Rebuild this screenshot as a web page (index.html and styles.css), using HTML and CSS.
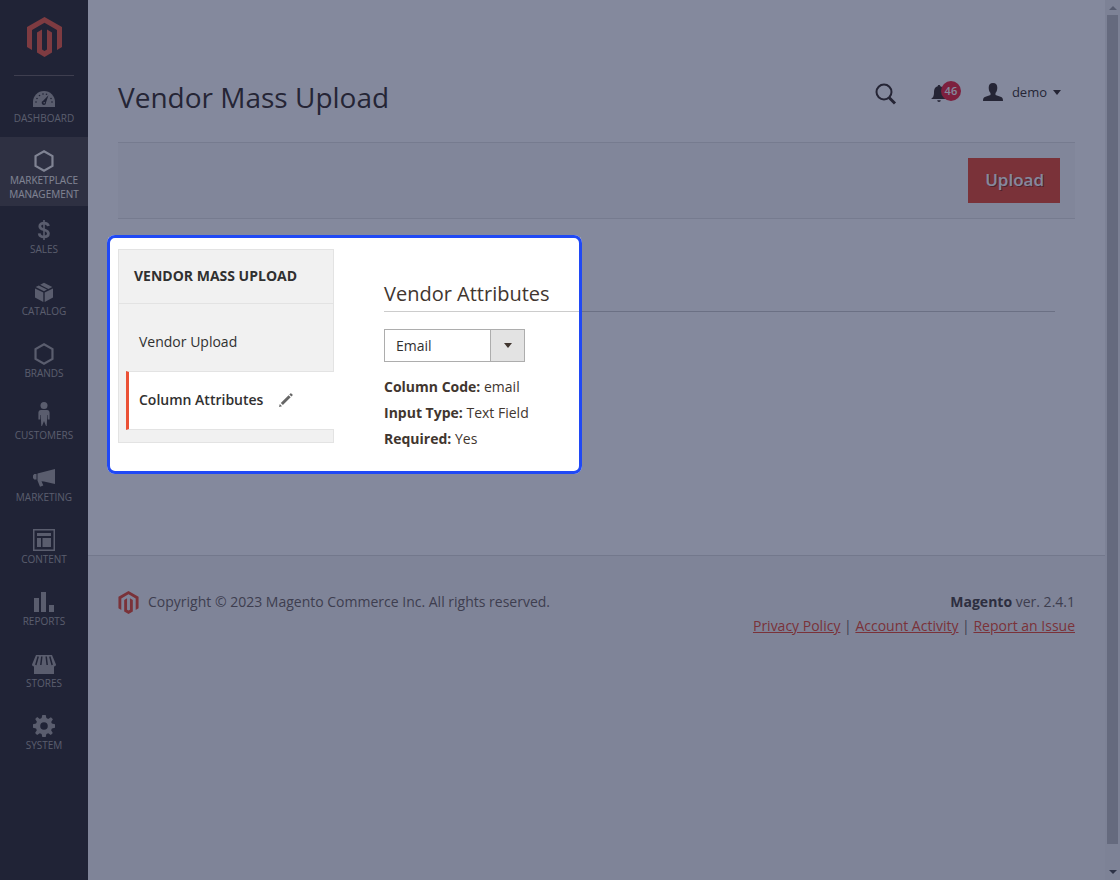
FILE: index.html
```html
<!DOCTYPE html>
<html lang="en">
<head>
<meta charset="utf-8">
<title>Vendor Mass Upload</title>
<link rel="stylesheet" href="styles.css">
</head>
<body>
<svg class="defs" width="0" height="0" aria-hidden="true">
  <symbol id="magento" viewBox="0 0 35 40">
    <path d="M17.500 0 35 10v20l-5 2.900V13L17.500 5.800 5 13v19.900L0 30V10z"/>
    <path d="M10 15.500l5-2.900v20l2.500 1.500 2.500-1.500v-20l5 2.900v20L17.500 40 10 35.500z"/>
  </symbol>
  <symbol id="hexagon" viewBox="0 0 20 20"><path d="M10 1.200 17.700 5.600v8.800L10 18.800 2.300 14.400V5.600z" fill="none" stroke="currentColor" stroke-width="2"/></symbol>
</svg>
<div class="app">
  <aside class="sidebar">
    <a class="logo" href="#" aria-label="Magento Admin"><svg width="35" height="40"><use href="#magento"/></svg></a>
    <nav class="menu">
      <a class="menu-item" href="#"><span class="menu-icon"><svg width="22" height="16" viewBox="0 0 22 16"><path d="M11 0A11 11 0 0 0 0 11v5h22v-5A11 11 0 0 0 11 0z"/><g class="cut"><circle cx="3" cy="11" r=".8"/><circle cx="4" cy="7.500" r=".8"/><circle cx="6.500" cy="4.500" r=".8"/><circle cx="10" cy="3" r=".8"/><circle cx="13.500" cy="3.200" r=".8"/><circle cx="18" cy="7.500" r=".8"/><circle cx="19" cy="11" r=".8"/><path d="M15.500 4.200 13 11.500a2.200 2.200 0 1 1-2.900-1.800z"/></g><circle cx="11.200" cy="11.800" r=".8"/></svg></span><span>Dashboard</span></a>
      <a class="menu-item is-active" href="#"><span class="menu-icon"><svg width="22" height="22"><use href="#hexagon"/></svg></span><span>Marketplace Management</span></a>
      <a class="menu-item" href="#"><span class="menu-icon"><svg width="14" height="20" viewBox="0 0 14 20"><path d="M11.500 6C11 4 9.300 3.200 7 3.200S2.800 4.200 2.800 6.200c0 4.600 8.600 2.500 8.600 7.300 0 2.200-1.900 3.300-4.400 3.300S2.500 15.700 2.200 13.300" fill="none" stroke="currentColor" stroke-width="2.800"/><path d="M6.200 0h1.600v20H6.200z"/></svg></span><span>Sales</span></a>
      <a class="menu-item" href="#"><span class="menu-icon"><svg width="18" height="20" viewBox="0 0 18 20"><path d="M0 6.500 8.300 10.600V20L0 15.600zM9.700 10.600 18 6.500v9.100L9.700 20zM.7 5 3.800 3.400l8.200 4.200L9 9.200zM5.200 2.700 9 .8l8.300 4.200-3.900 2z"/></svg></span><span>Catalog</span></a>
      <a class="menu-item" href="#"><span class="menu-icon"><svg width="22" height="22"><use href="#hexagon"/></svg></span><span>Brands</span></a>
      <a class="menu-item" href="#"><span class="menu-icon person"><svg width="12" height="24" viewBox="0 0 12 24"><circle cx="6" cy="3.600" r="3.500"/><path d="M3 8h6c2 0 2.600 1.500 2.600 3v6.500H9.800V13h-.5l-.6 11H8l-2-5-2 5h-.7l-.6-11h-.5v4.500H.4V11C.4 9.500 1 8 3 8z"/></svg></span><span>Customers</span></a>
      <a class="menu-item" href="#"><span class="menu-icon"><svg width="22" height="18" viewBox="0 0 22 18"><path d="M3.500 5v5.500H1.200L0 9V6.500L1.200 5zM4.500 4.500 22 0v15L11 12.500l-2.500-.3 1.800 4.300-3.300 1.300L4.500 11.600z"/></svg></span><span>Marketing</span></a>
      <a class="menu-item" href="#"><span class="menu-icon"><svg width="22" height="22" viewBox="0 0 22 22"><path d="M.75.750h20.500v20.500H.750z" fill="none" stroke="currentColor" stroke-width="1.500"/><path d="M4 4h14v3H4zM4 9h4v9H4zM9.500 9H18v9H9.500z"/></svg></span><span>Content</span></a>
      <a class="menu-item" href="#"><span class="menu-icon"><svg width="20" height="20" viewBox="0 0 20 20"><path d="M0 6h5v14H0zM7 0h5v20H7zM15 13h5v7h-5z"/></svg></span><span>Reports</span></a>
      <a class="menu-item" href="#"><span class="menu-icon"><svg width="24" height="19" viewBox="0 0 24 19"><path d="M4 0h16l4 9.500c0 1-1 2-2 2V19H2v-7.500c-1 0-2-1-2-2z"/><path class="cut-line" d="M6.200 1.500 3.800 10M9.800 1.500 8.800 10M14.200 1.500l1 8.500M17.800 1.500 20.200 10"/></svg></span><span>Stores</span></a>
      <a class="menu-item" href="#"><span class="menu-icon"><svg width="22" height="22" viewBox="-11 -11 22 22"><path fill-rule="evenodd" d="M-1.700-11h3.400l.7 3.100 1.800.8L6.900-8.800 8.900-6.800 7.200-4.100l.7 1.700 3.100.7v3.400l-3.100.7-.8 1.800L8.800 6.900 6.800 8.900 4.200 7.200l-1.800.7L1.700 11h-3.400l-.7-3.100-1.800-.7L-6.900 8.900-8.900 6.900-7.200 4.200-7.900 2.400-11 1.700v-3.400l3.100-.7.8-1.800L-8.800-6.900-6.800-8.900l2.600 1.800 1.800-.8zM0-3.800A3.800 3.800 0 1 0 0 3.800 3.800 3.800 0 1 0 0-3.800z"/></svg></span><span>System</span></a>
    </nav>
  </aside>

  <div class="page">
    <main class="main">
      <header class="header">
        <h1>Vendor Mass Upload</h1>
        <div class="tools">
          <button class="tool search" aria-label="Search"><svg width="22" height="22" viewBox="0 0 22 22"><circle cx="9" cy="9" r="7.500" fill="none" stroke="currentColor" stroke-width="2"/><path d="M14 14.500 20 20.500" fill="none" stroke="currentColor" stroke-width="3"/></svg></button>
          <button class="tool bell" aria-label="Notifications"><svg width="16" height="18" viewBox="0 0 16 18"><path d="M8 0c.8 0 1.300.5 1.300 1.300C12 2 13 4.200 13 7c0 4 .8 5.500 3 7H0c2.200-1.500 3-3 3-7 0-2.800 1-5 3.700-5.700C6.700.5 7.200 0 8 0zM6.200 15.200h3.600a1.800 1.800 0 0 1-3.600 0z"/></svg><span class="badge">46</span></button>
          <button class="tool user"><svg width="20" height="18" viewBox="0 0 20 18"><path d="M10 0c3 0 4.300 2 4.300 4.700 0 2.200-.6 4-1.800 5.300v2l5 1.700c1.800.6 2.500 1.300 2.500 4.300H0c0-3 .7-3.700 2.500-4.300l5-1.700v-2C6.300 8.700 5.700 6.900 5.700 4.700 5.700 2 7 0 10 0z"/></svg><span>demo</span><i class="caret"></i></button>
        </div>
      </header>
      <div class="toolbar"><button class="primary">Upload</button></div>
      <div class="columns">
        <nav class="tabs" aria-label="Vendor Mass Upload">
          <strong class="tabs-title">Vendor Mass Upload</strong>
          <div class="tabs-list">
            <a class="tab" href="#">Vendor Upload</a>
            <a class="tab is-current" href="#">Column Attributes<svg width="14" height="14" viewBox="0 0 14 14"><path d="M0 14l.8-3L3 13.200zM1.800 10 9.600 2.200l2.100 2.100L3.900 12.100zM10.300 1.500 11.400.4c.3-.3.600-.3.900 0l1.200 1.200c.3.300.3.600 0 .9L12.400 3.600z"/></svg></a>
          </div>
        </nav>
        <section class="attributes">
          <h2>Vendor Attributes</h2>
          <div class="select"><select aria-label="Attribute"><option>Email</option></select></div>
          <p><b>Column Code:</b> email</p>
          <p><b>Input Type:</b> Text Field</p>
          <p><b>Required:</b> Yes</p>
        </section>
        <div class="spotlight"></div>
      </div>
    </main>
    <footer class="footer">
      <div class="copyright"><svg width="21" height="23"><use href="#magento"/></svg><span>Copyright © 2023 Magento Commerce Inc. All rights reserved.</span></div>
      <div class="legal">
        <div><b>Magento</b> ver. 2.4.1</div>
        <div><a href="#">Privacy Policy</a> | <a href="#">Account Activity</a> | <a href="#">Report an Issue</a></div>
      </div>
    </footer>
  </div>

  <div class="scrollbar" aria-hidden="true">
    <i class="arrow-up"></i><div class="thumb"></div><i class="arrow-down"></i>
  </div>
</div>
</body>
</html>
```

FILE: styles.css
```css
* { box-sizing: border-box; }
body {
  margin: 0;
  overflow: hidden;
  background: #fff;
  color: #41362f;
  font: 14px/24px "Open Sans", sans-serif;
}
h1, h2, p { margin: 0; font-weight: 400; }
svg { display: block; fill: currentColor; flex: none; }
.defs { position: absolute; }
button { border: 0; background: none; padding: 0; font: inherit; color: inherit; }
.app { display: flex; min-height: 100vh; }

.sidebar { flex: none; width: 88px; background: #373330; }
.logo {
  display: flex;
  justify-content: center;
  margin: 0 14px;
  padding: 17px 0 18px;
  border-bottom: 1px solid #736963;
  color: #f26346;
}
.menu { margin-top: -1px; }
.menu-item {
  display: block;
  min-height: 62px;
  padding: 12px 4px 5px;
  color: #aaa6a0;
  font-size: 10px;
  line-height: 14px;
  text-align: center;
  text-decoration: none;
  text-transform: uppercase;
}
.menu-item.is-active { background: #524d49; color: #f7f3eb; }
.menu-icon { display: flex; height: 24px; align-items: center; justify-content: center; }
.menu-icon.person { height: 24px; padding-bottom: 4px; }
.cut { fill: #373330; }
.cut-line { fill: none; stroke: #373330; stroke-width: 1.5px; }

.page { flex: 1; display: flex; flex-direction: column; min-width: 0; }
.main { min-height: 555px; padding: 0 30px; }
.header { display: flex; justify-content: space-between; height: 142px; padding-top: 77px; }
h1 { font-size: 28px; line-height: 40px; }
.tools { display: flex; align-items: center; height: 30px; padding-right: 14px; }
.tool { display: flex; align-items: center; color: #41362f; }
.search { margin-top: 4px; }
.bell { margin-left: 34px; }
.bell svg { margin-top: 4px; }
.badge {
  width: 20px;
  height: 20px;
  margin: -2px 0 0 -6px;
  border-radius: 10px;
  background: #f02c40;
  color: #fff;
  font-size: 11px;
  font-weight: 600;
  line-height: 20px;
}
.user { margin-left: 22px; font-size: 13px; }
.user span { margin: 0 6px 0 9px; }
.caret { border: 4px solid transparent; border-top: 5px solid #41362f; border-bottom: 0; }
.toolbar {
  display: flex;
  justify-content: flex-end;
  padding: 15px;
  border: 1px solid #e3e3e3;
  border-width: 1px 0;
  background: #f8f8f8;
}
.primary {
  padding: 10px 16px 11px 17px;
  background: #eb5136;
  color: #fff;
  font-size: 17px;
  font-weight: 600;
  text-shadow: 1px 1px 0 rgba(0, 0, 0, .4);
}

.columns { position: relative; display: flex; gap: 50px; padding-top: 30px; }
.tabs { flex: none; align-self: flex-start; width: 216px; border: 1px solid #e3e3e3; background: #f1f1f1; color: #303030; }
.tabs-title { display: block; padding: 14px 15px 15px; border-bottom: 1px solid #e3e3e3; font-weight: 700; text-transform: uppercase; }
.tabs-list { padding: 9px 0 12px 7px; }
.tab { display: flex; align-items: center; gap: 16px; padding: 17px 13px; color: inherit; text-decoration: none; }
.tab.is-current {
  margin-right: -1px;
  padding: 16px 10px 17px;
  border: 1px solid #e3e3e3;
  border-right: 0;
  border-left: 3px solid #eb5136;
  background: #fff;
  font-weight: 600;
}
.tab svg { color: #666; }
.attributes { flex: 1; margin-right: 20px; padding-top: 30px; }
h2 { padding-bottom: 3px; border-bottom: 1px solid #ccc; font-size: 20px; line-height: 29px; }
.select { position: relative; width: 141px; margin: 17px 0 12px; }
.select select {
  display: block;
  width: 100%;
  height: 33px;
  padding: 0 11px;
  appearance: none;
  border: 1px solid #adadad;
  border-radius: 0;
  background: linear-gradient(#adadad, #adadad) right 33px top / 1px 100% no-repeat,
    linear-gradient(#e3e3e3, #e3e3e3) right / 33px 100% no-repeat, #fff;
  color: #303030;
  font: inherit;
}
.select::after {
  content: "";
  position: absolute;
  top: 14px;
  right: 13px;
  border: 4px solid transparent;
  border-top: 5px solid #41362f;
  border-bottom: 0;
  pointer-events: none;
}
.attributes p { line-height: 26px; }
.attributes b { font-weight: 700; }

/* Guided-tour highlight: the spread shadow dims everything outside the box */
.spotlight {
  position: absolute;
  top: 16px;
  left: -11px;
  z-index: 5;
  width: 475px;
  height: 239px;
  border: 3px solid #2049f5;
  border-radius: 8px;
  box-shadow: 0 0 0 2000px rgba(9, 20, 60, .5);
  pointer-events: none;
}

.footer {
  flex: 1;
  display: flex;
  justify-content: space-between;
  align-items: flex-start;
  padding: 34px 30px;
  border-top: 1px solid #ddd;
  background: #f5f5f5;
  color: #736963;
}
.copyright { display: flex; align-items: center; gap: 9px; }
.copyright svg { color: #eb5136; }
.legal { text-align: right; }
.legal b { font-weight: 700; color: #514943; }
.legal a { color: #eb5136; }

.scrollbar { flex: none; display: flex; flex-direction: column; align-items: center; width: 15px; background: #f1f1f1; }
.thumb { flex: 1; width: 11px; margin-bottom: 26px; background: #c1c1c1; }
.arrow-up { margin: 6px 0 5px; border: 4px solid transparent; border-top: 0; border-bottom-color: #a3a3a3; }
.arrow-down { margin-bottom: 6px; border: 4px solid transparent; border-bottom: 0; border-top-color: #505050; }
```
